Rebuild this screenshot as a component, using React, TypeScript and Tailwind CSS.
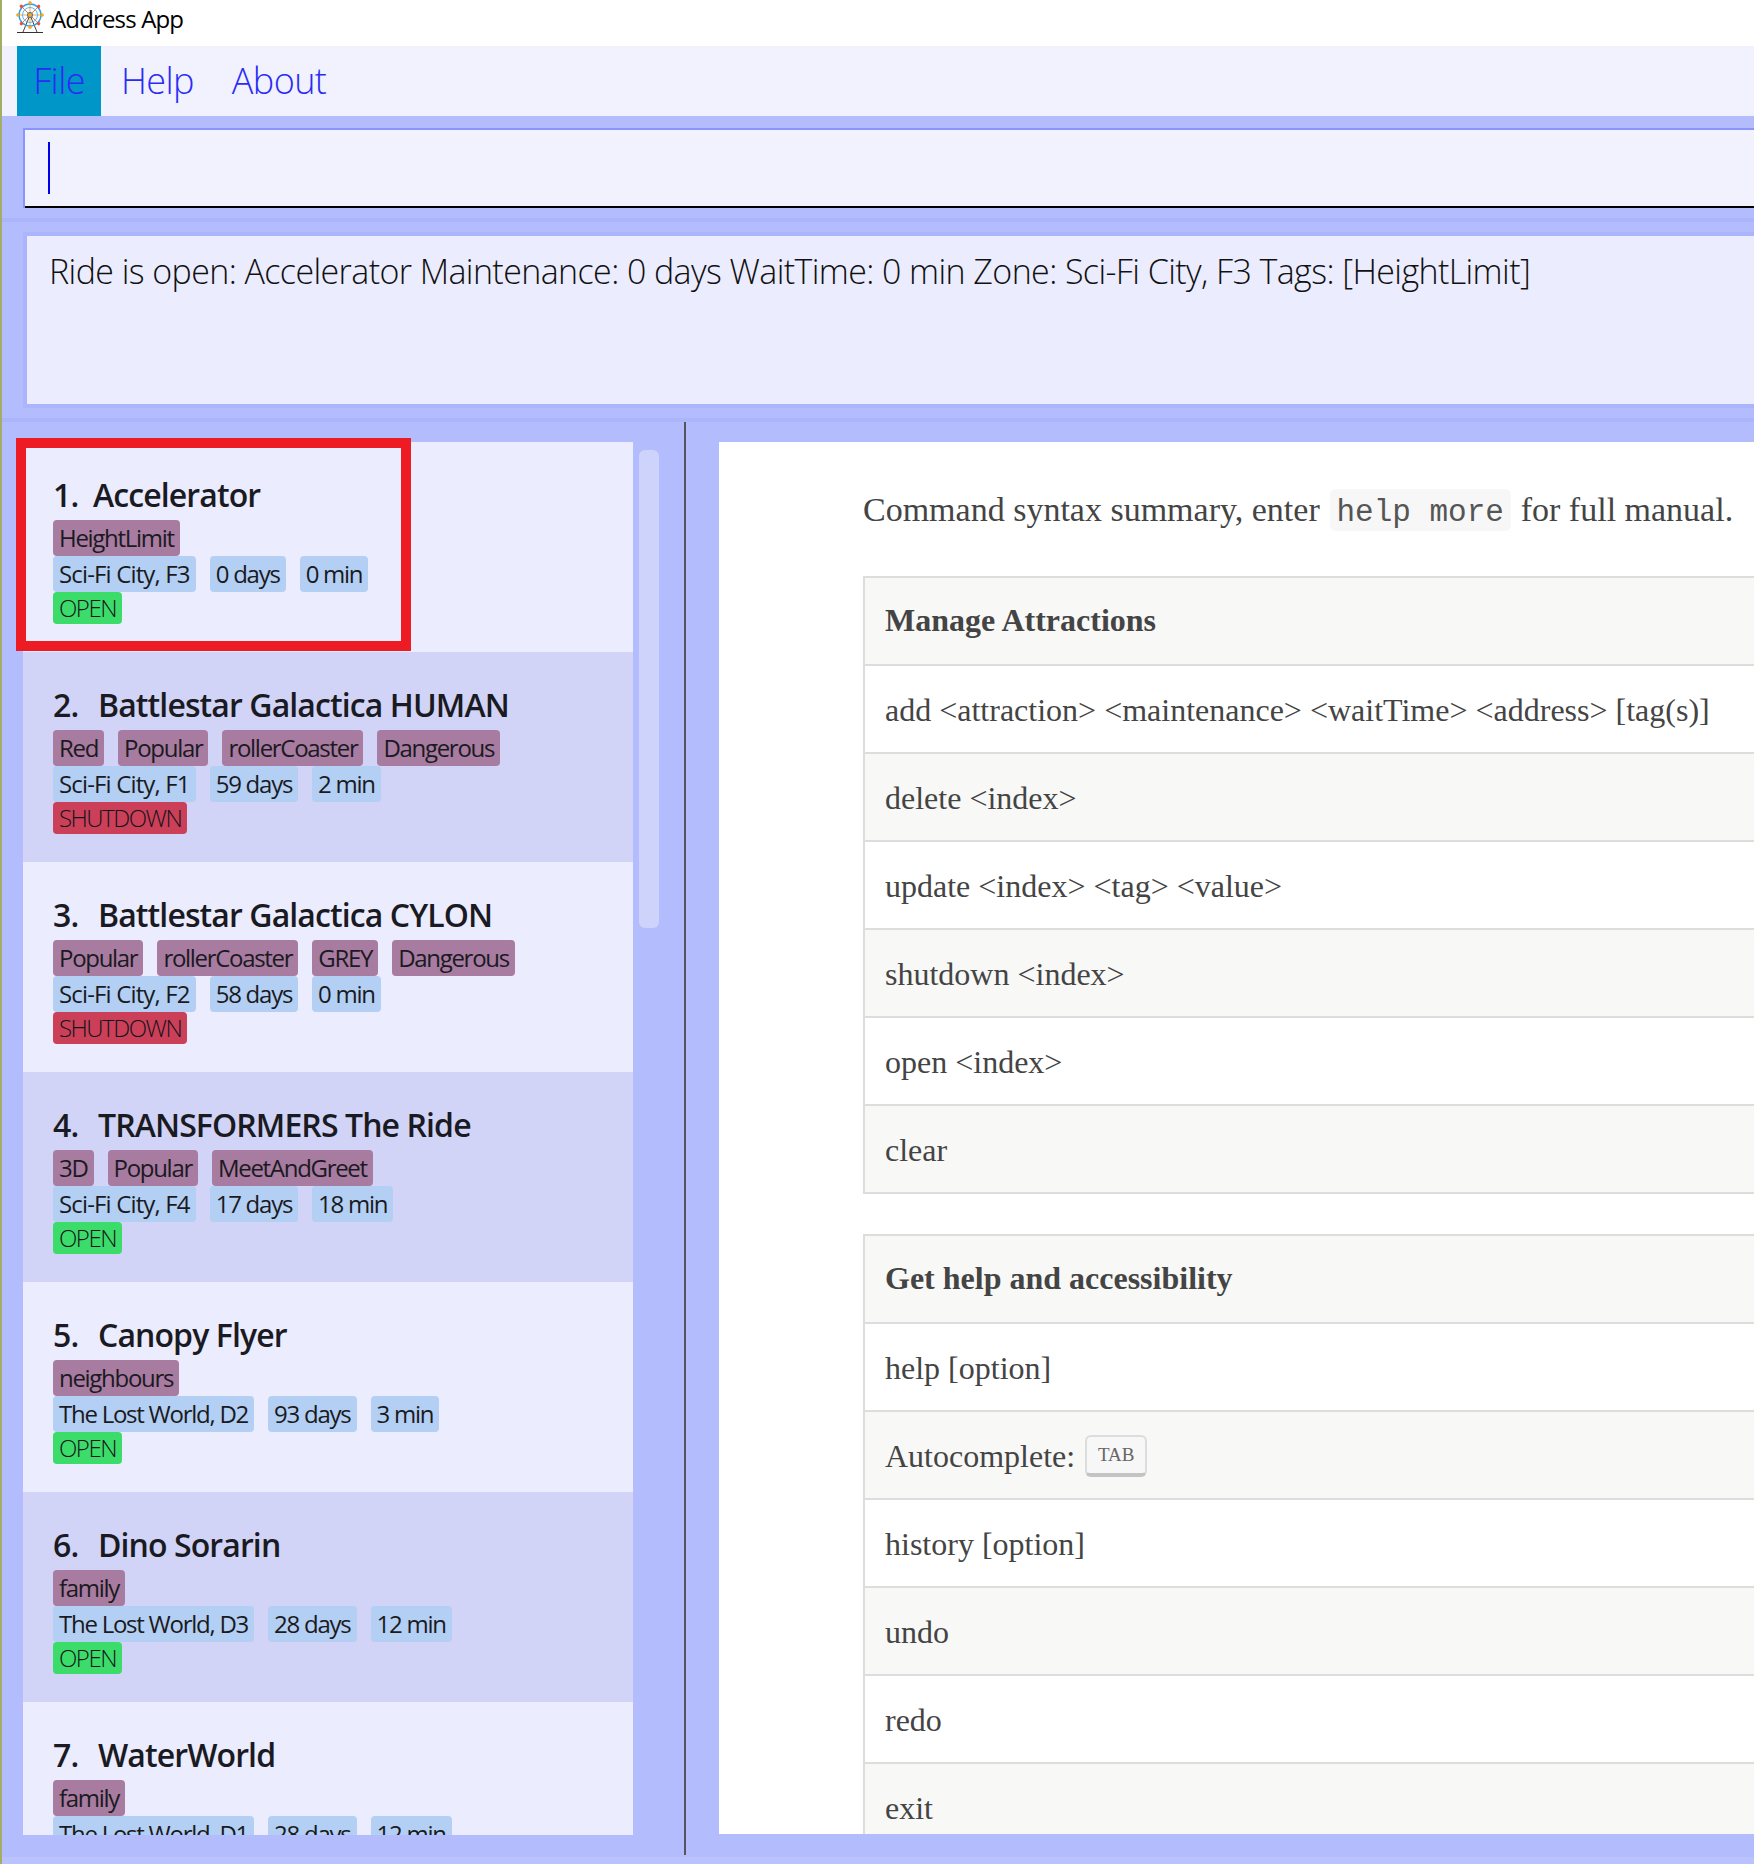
// Address App window: menu, command box, result display, ride list and help pane
const rides = [
  { name: 'Accelerator', tags: ['HeightLimit'], zone: 'Sci-Fi City, F3', days: '0 days', wait: '0 min', status: 'OPEN' },
  { name: 'Battlestar Galactica HUMAN', tags: ['Red', 'Popular', 'rollerCoaster', 'Dangerous'], zone: 'Sci-Fi City, F1', days: '59 days', wait: '2 min', status: 'SHUTDOWN' },
  { name: 'Battlestar Galactica CYLON', tags: ['Popular', 'rollerCoaster', 'GREY', 'Dangerous'], zone: 'Sci-Fi City, F2', days: '58 days', wait: '0 min', status: 'SHUTDOWN' },
  { name: 'TRANSFORMERS The Ride', tags: ['3D', 'Popular', 'MeetAndGreet'], zone: 'Sci-Fi City, F4', days: '17 days', wait: '18 min', status: 'OPEN' },
  { name: 'Canopy Flyer', tags: ['neighbours'], zone: 'The Lost World, D2', days: '93 days', wait: '3 min', status: 'OPEN' },
  { name: 'Dino Sorarin', tags: ['family'], zone: 'The Lost World, D3', days: '28 days', wait: '12 min', status: 'OPEN' },
  { name: 'WaterWorld', tags: ['family'], zone: 'The Lost World, D1', days: '28 days', wait: '12 min', status: 'OPEN' },
];

function FerrisWheel() {
  const spokes = [0, 45, 90, 135, 180, 225, 270, 315];
  return (
    <svg viewBox="0 0 30 32" className="w-[30px] h-[32px] shrink-0">
      <path d="M15 14 L8 31 M15 14 L22 31" stroke="#444" strokeWidth="1" fill="none" />
      <path d="M2 31.5 H28" stroke="#333" strokeWidth="1" />
      {spokes.map((a) => (
        <line key={a} x1="15" y1="14" x2="15" y2="3" stroke={a % 90 === 0 ? '#f5a623' : '#ef6a4c'} strokeWidth="0.9" transform={`rotate(${a} 15 14)`} />
      ))}
      <circle cx="15" cy="14" r="11" fill="none" stroke="#2fa0e6" strokeWidth="1.4" />
      <circle cx="15" cy="14" r="7.5" fill="none" stroke="#5cb8ee" strokeWidth="1" />
      <circle cx="15" cy="14" r="2.6" fill="#f5a623" stroke="#2a6fb0" strokeWidth="0.9" />
      {spokes.map((a) => (
        <circle key={a} cx="15" cy="1.8" r="1.7" fill={a % 90 === 0 ? '#f9a825' : '#ee4f36'} transform={`rotate(${a} 15 14)`} />
      ))}
    </svg>
  );
}

function Chip({ text, color }: { text: string; color: string }) {
  return <span className={`h-[36px] leading-[36px] px-[6px] rounded-[4px] text-[24px] text-[#1a1a22] whitespace-nowrap ${color}`}>{text}</span>;
}

function RideCard({ index, ride }: { index: number; ride: (typeof rides)[number] }) {
  const shaded = index % 2 === 1;
  const open = ride.status === 'OPEN';
  const blue = 'bg-[#b3cff3] tracking-[-1.25px]';
  return (
    <div className={`h-[210px] shrink-0 pl-[30px] pt-[29px] ${shaded ? 'bg-[#d1d4f7]' : 'bg-[#ebecfe]'}`}>
      <div className="h-[49px] leading-[48px] text-[32px] font-semibold tracking-[-0.9px] text-[#1a1a22] whitespace-pre flex">
        <span className={index === 0 ? 'w-[40px]' : 'w-[45px]'}>{index + 1}.</span>
        <span>{ride.name}</span>
      </div>
      <div className="flex gap-[14px]">
        {ride.tags.map((t) => <Chip key={t} text={t} color="bg-[#a87ba0] tracking-[-1.3px]" />)}
      </div>
      <div className="flex gap-[14px]">
        <Chip text={ride.zone} color={ride.zone.startsWith('Sci') ? 'bg-[#b3cff3] tracking-[-0.85px]' : blue} />
        <Chip text={ride.days} color={blue} />
        <Chip text={ride.wait} color={blue} />
      </div>
      <div className="flex">
        <span className={`h-[32px] leading-[32px] px-[6px] rounded-[4px] text-[24px] font-light tracking-[-1.5px] text-[#14141c] ${open ? 'bg-[#3bdc69]' : 'bg-[#cb4058]'}`}>
          {ride.status}
        </span>
      </div>
    </div>
  );
}

function Row({ shaded, bold, children }: { shaded: boolean; bold?: boolean; children: React.ReactNode }) {
  return (
    <div className={`h-[88px] flex items-center pl-[20px] border-t-2 border-l-2 border-[#dddddd] text-[32px] text-[#444444] whitespace-pre ${shaded ? 'bg-[#f8f8f7]' : 'bg-white'} ${bold ? 'font-bold pb-[2px]' : 'pt-[2px]'}`}>
      {children}
    </div>
  );
}

export default function App() {
  const manage = ['add <attraction> <maintenance> <waitTime> <address> [tag(s)]', 'delete <index>', 'update <index> <tag> <value>', 'shutdown <index>', 'open <index>', 'clear'];
  const general = ['help [option]', 'AUTO', 'history [option]', 'undo', 'redo', 'exit'];

  return (
    <div className="relative w-[1754px] h-[1864px] overflow-hidden flex flex-col bg-[#b3bcfd] border-l-2 border-[#a3ad63] font-['Open_Sans',sans-serif]">
      {/* Title bar */}
      <div className="h-[46px] shrink-0 bg-white flex items-start pl-[13px] gap-[6px]">
        <div className="pt-[1px]"><FerrisWheel /></div>
        <span className="h-[38px] leading-[38px] text-[24px] tracking-[-0.85px] text-black">Address App</span>
      </div>

      {/* Menu */}
      <div className="h-[70px] shrink-0 bg-[#f1f2fe] flex pl-[15px] text-[36px] font-light tracking-[-0.6px] text-[#2a2cf5]">
        <div className="w-[84px] bg-[#0096c8] flex items-center justify-center">File</div>
        <div className="flex items-center pl-[20px]">Help</div>
        <div className="flex items-center pl-[38px]">About</div>
      </div>

      {/* Command box */}
      <div className="h-[102px] shrink-0 pt-[12px] pl-[21px]">
        <div className="h-[80px] bg-[#f1f2fe] border-2 border-[#8a95fc] border-r-0 border-b-0 relative">
          <div className="absolute left-[23px] top-[12px] w-[2px] h-[52px] bg-[#0000ee]" />
          <div className="absolute left-0 right-0 bottom-0 h-[2px] bg-black" />
        </div>
      </div>

      {/* Result display */}
      <div className="h-[200px] shrink-0 border-t-4 border-[#abb5fc] pt-[10px]">
        <div className="ml-[21px] h-[176px] border-t-4 border-b-4 border-l-4 border-[#abb5fc] bg-[#ebecfe] pl-[22px] pt-[12px] text-[34px] leading-[46px] font-light tracking-[-0.6px] text-[#111] whitespace-nowrap overflow-hidden">
          Ride is open: Accelerator Maintenance: 0 days WaitTime: 0 min Zone: Sci-Fi City, F3 Tags: [HeightLimit]
        </div>
      </div>

      {/* Main split */}
      <div className="h-[439px] grow flex border-t-4 border-[#abb5fc]">
        <div className="w-[682px] shrink-0 pl-[21px] pt-[20px] pb-[22px] flex">
          <div className="w-[610px] h-full overflow-hidden flex flex-col">
            {rides.map((r, i) => <RideCard key={r.name} index={i} ride={r} />)}
          </div>
          <div className="ml-[6px] mt-[8px] w-[20px] h-[478px] rounded-[6px] bg-[#ced3fc]" />
        </div>
        <div className="w-[2px] shrink-0 bg-[#55555f] mb-[2px]" />
        <div className="grow pl-[33px] pt-[20px] pb-[23px] flex min-w-0">
          <div className="grow h-full bg-white overflow-hidden pl-[144px] font-['Liberation_Serif',serif]">
            <p className="mt-[45px] h-[44px] flex items-center text-[34px] text-[#444444] whitespace-pre">
              <span>Command syntax summary, enter</span>
              <code className="ml-[10px] mr-[10px] w-[181px] text-center h-[42px] leading-[48px] mt-[2px] rounded-[6px] bg-[#f7f7f7] font-['Liberation_Mono',monospace] font-light text-[#555555] text-[31px]">help more</code>
              <span>for full manual.</span>
            </p>
            <div className="mt-[45px] w-[1200px]">
              <Row shaded bold>Manage Attractions</Row>
              {manage.map((m, i) => <Row key={m} shaded={i % 2 === 1}>{m}</Row>)}
              <div className="h-[2px] bg-[#dddddd]" />
            </div>
            <div className="mt-[40px] w-[1200px]">
              <Row shaded bold>Get help and accessibility</Row>
              {general.map((m, i) => (
                <Row key={m} shaded={i % 2 === 1}>
                  {m === 'AUTO' ? (
                    <>
                      Autocomplete:{' '}
                      <kbd className="ml-[2px] w-[62px] h-[42px] flex items-center justify-center rounded-[6px] border-2 border-b-4 border-[#dddddd] border-b-[#c4c4c4] bg-[#f7f7f7] font-['Liberation_Serif',serif] text-[19px] text-[#666666]">TAB</kbd>
                    </>
                  ) : m}
                </Row>
              ))}
            </div>
          </div>
        </div>
      </div>
      {/* Bottom edge */}
      <div className="h-[7px] shrink-0 bg-[#bac3fe]" />

      {/* Red annotation box drawn over the first list item */}
      <div className="absolute left-[14px] top-[438px] w-[395px] h-[213px] border-[10px] border-[#ed1c24]" />
    </div>
  );
}
